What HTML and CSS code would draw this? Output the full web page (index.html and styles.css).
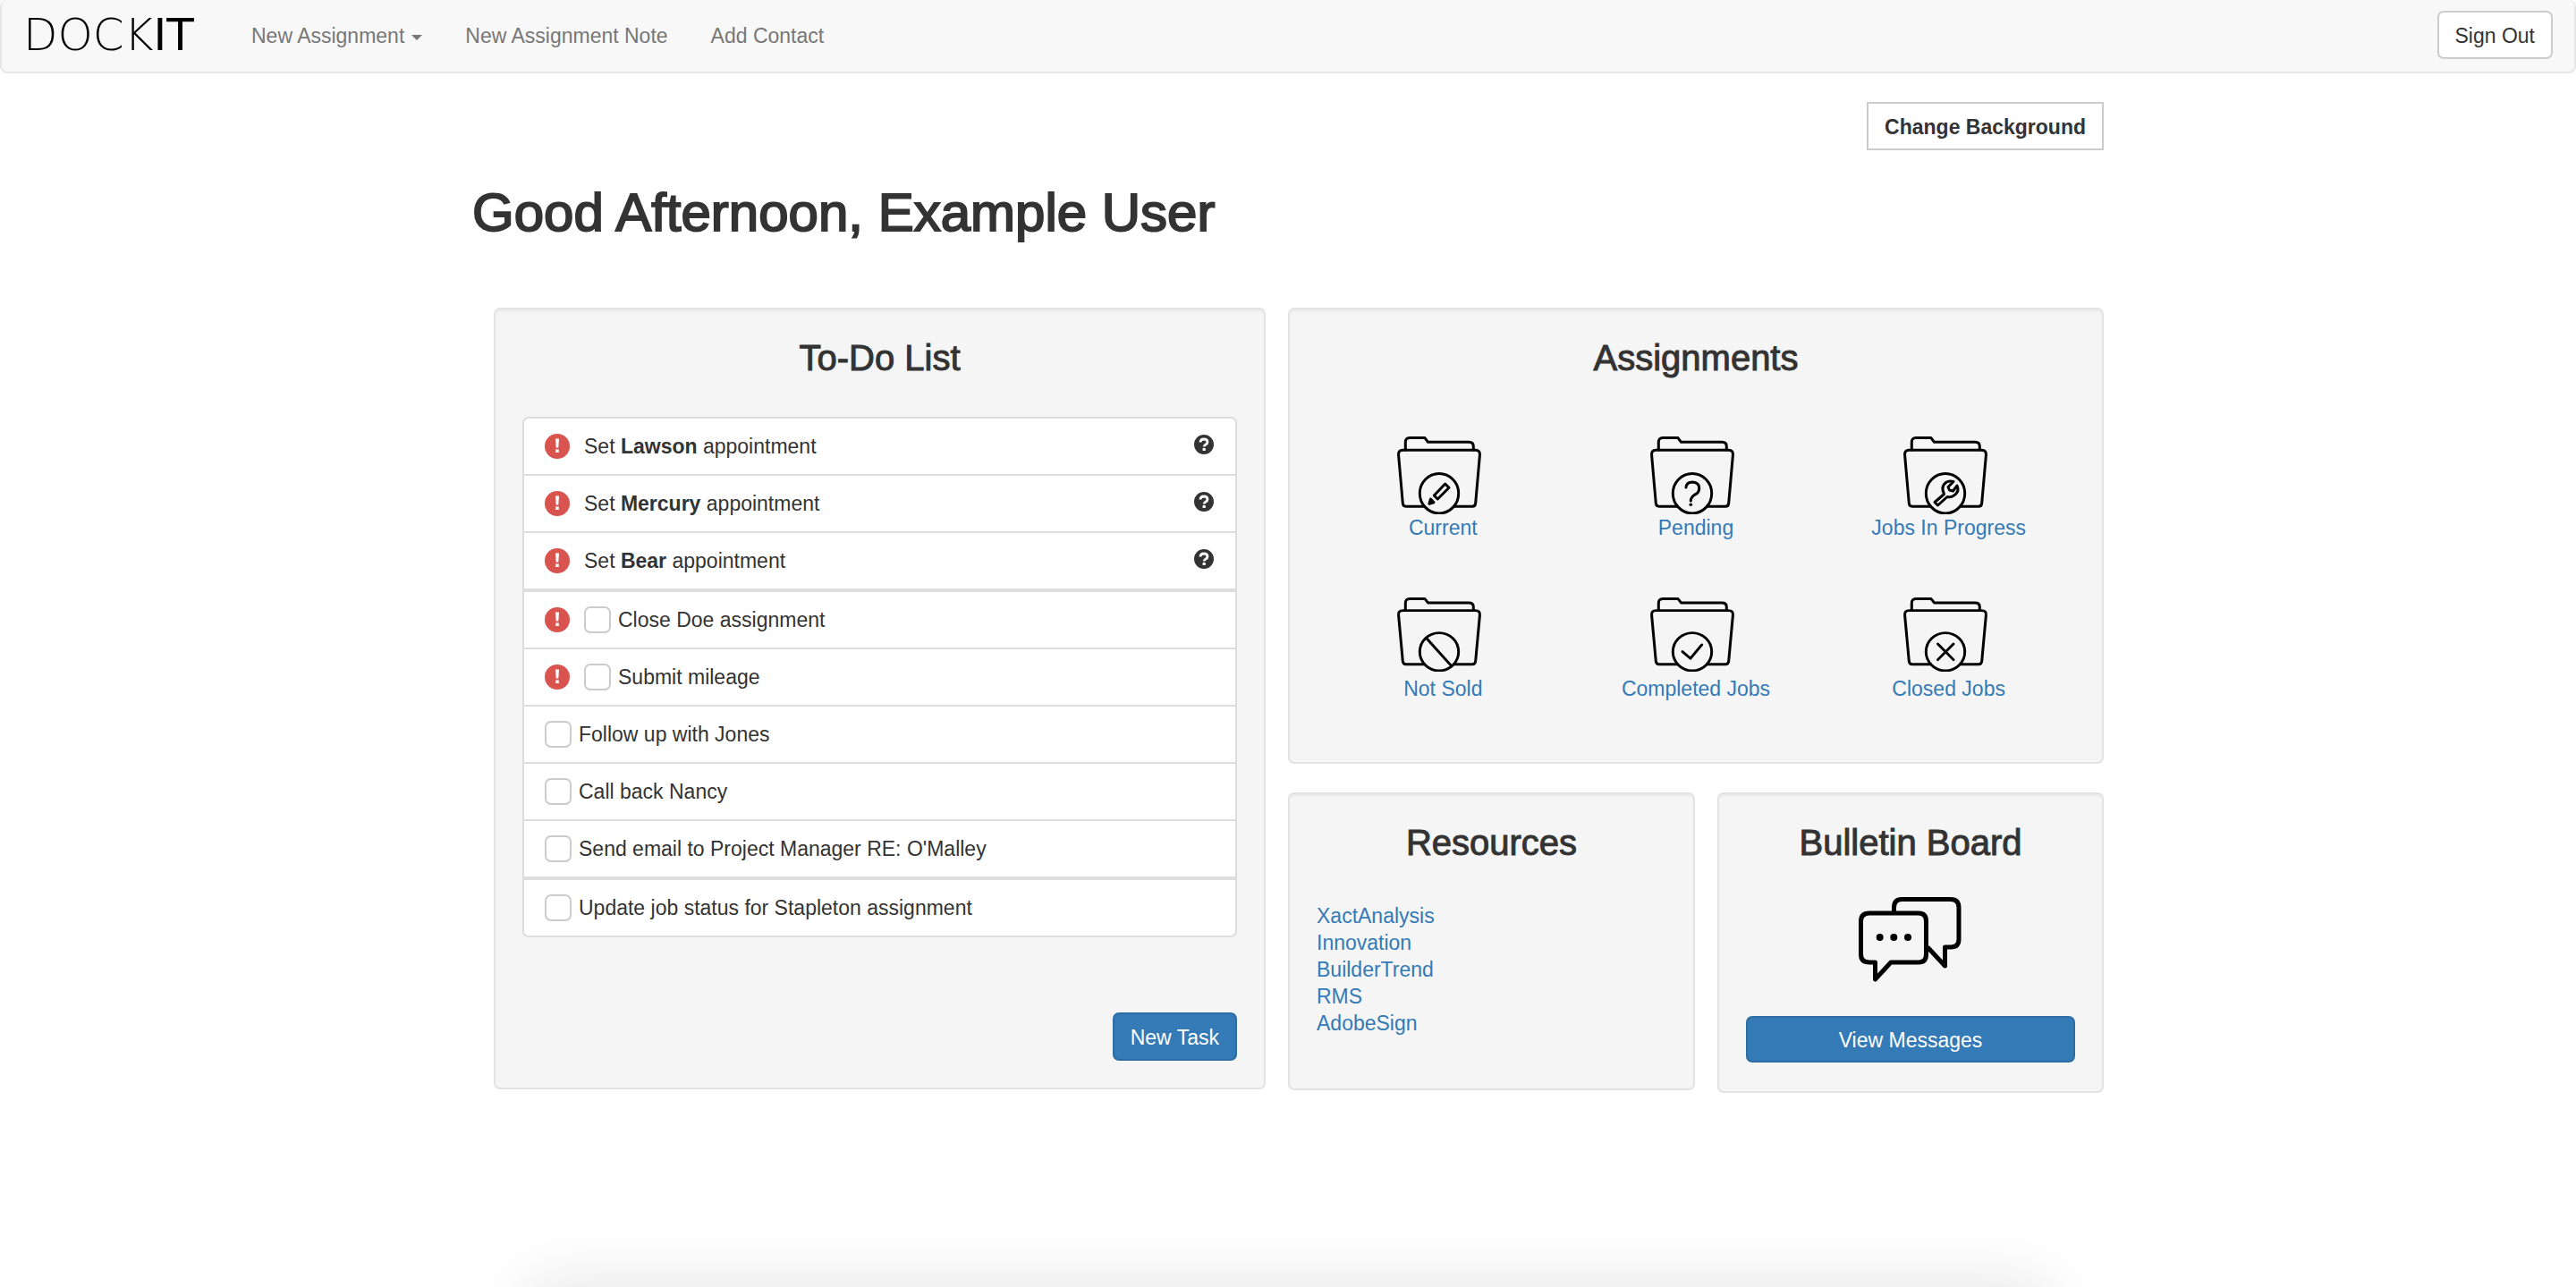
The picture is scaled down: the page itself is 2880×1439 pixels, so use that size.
FILE: index.html
```html
<!DOCTYPE html>
<html lang="en">
<head>
<meta charset="utf-8">
<meta name="viewport" content="width=device-width, initial-scale=1">
<title>Dockit</title>
<link rel="stylesheet" href="styles.css">
</head>
<body>
<svg class="sprite" aria-hidden="true">
  <symbol id="folder" viewBox="0 0 100 88" preserveAspectRatio="none">
    <path d="M12.3 16V7.5Q12.3 2.6 17 2.6H34L37.5 7.3H83Q88.3 7.3 88.3 12V16"/>
    <path d="M33.5 79.3H13Q9.6 79.3 9.3 75.5L4.6 22Q4 16.3 9.5 16.3H90.5Q96 16.3 95.4 22L90.7 75.5Q90.4 79.3 87 79.3H66.5"/>
    <ellipse cx="50" cy="64.7" rx="21.7" ry="22.2"/>
  </symbol>
  <symbol id="alert" viewBox="0 0 28 28">
    <circle cx="14" cy="14" r="14" fill="#d9534f"/>
    <path d="M12 5.5h4l-.7 10h-2.600z M12.200 17.500h3.600v3.500h-3.600z" fill="#fff"/>
  </symbol>
  <symbol id="help" viewBox="0 0 22 22">
    <circle cx="11" cy="11" r="11" fill="#333"/>
    <path d="M7 8.500Q7.200 5 11 5Q15 5 15 8.300Q15 10 13 11Q11.200 12 11.200 13.500" fill="none" stroke="#fff" stroke-width="2.800"/>
    <path d="M9.600 15h3.200v3h-3.200z" fill="#fff"/>
  </symbol>
</svg>

<div class="page">
  <nav class="navbar">
    <a class="brand" href="#">DOCK<span class="brand-end">IT</span></a>
    <div class="nav-links">
      <button class="nav-link" type="button">New Assignment<span class="caret"></span></button>
      <a class="nav-link" href="#">New Assignment Note</a>
      <a class="nav-link" href="#">Add Contact</a>
    </div>
    <button class="btn btn-default" type="button">Sign Out</button>
  </nav>

  <main class="container">
    <div class="toolbar">
      <button class="btn btn-default btn-square" type="button">Change Background</button>
    </div>
    <h1>Good Afternoon, Example User</h1>

    <div class="board">
      <section class="panel">
        <h2>To-Do List</h2>
        <div class="tasks">
          <ul class="task-group">
            <li><svg class="alert"><use href="#alert"/></svg><span>Set <b>Lawson</b> appointment</span><svg class="help"><use href="#help"/></svg></li>
            <li><svg class="alert"><use href="#alert"/></svg><span>Set <b>Mercury</b> appointment</span><svg class="help"><use href="#help"/></svg></li>
            <li><svg class="alert"><use href="#alert"/></svg><span>Set <b>Bear</b> appointment</span><svg class="help"><use href="#help"/></svg></li>
          </ul>
          <ul class="task-group">
            <li><svg class="alert"><use href="#alert"/></svg><label><input type="checkbox">Close Doe assignment</label></li>
            <li><svg class="alert"><use href="#alert"/></svg><label><input type="checkbox">Submit mileage</label></li>
            <li><label><input type="checkbox">Follow up with Jones</label></li>
            <li><label><input type="checkbox">Call back Nancy</label></li>
            <li><label><input type="checkbox">Send email to Project Manager RE: O'Malley</label></li>
          </ul>
          <ul class="task-group">
            <li><label><input type="checkbox">Update job status for Stapleton assignment</label></li>
          </ul>
        </div>
        <div class="panel-actions">
          <button class="btn btn-primary" type="button">New Task</button>
        </div>
      </section>

      <div class="side">
        <section class="panel">
          <h2>Assignments</h2>
          <div class="folders">
            <a class="folder" href="#">
              <svg viewBox="0 0 100 88"><use href="#folder"/><path d="M56.700 54L61 58.300L48.300 71L44.300 67Z"/><path d="M38.900 76.300L40.500 71L44 74.700Z" fill="#000"/></svg>
              Current
            </a>
            <a class="folder" href="#">
              <svg viewBox="0 0 100 88"><use href="#folder"/><path d="M43 58Q43.500 52 50.300 52Q57.700 52.500 57.700 59Q57.700 64 53 66Q48.300 69 48.300 73"/><circle class="dot" cx="48.300" cy="77.300" r="1.800"/></svg>
              Pending
            </a>
            <a class="folder" href="#">
              <svg viewBox="0 0 100 88"><use href="#folder"/><path d="M38 74.500L48.500 65.500Q44.500 57 50.500 52.500Q54 50 59 51.500L53 57.500L54.500 61L58.500 62L63 56Q65.500 61.500 61.500 65.500Q57.500 69.500 52 68.500L41.500 78Z"/></svg>
              Jobs In Progress
            </a>
            <a class="folder folder-low" href="#">
              <svg viewBox="0 0 100 88" preserveAspectRatio="none"><use href="#folder"/><path d="M35.500 48.500L63.500 81"/></svg>
              Not Sold
            </a>
            <a class="folder folder-low" href="#">
              <svg viewBox="0 0 100 88" preserveAspectRatio="none"><use href="#folder"/><path d="M39 64.500L48 72.500L60.700 56.500"/></svg>
              Completed Jobs
            </a>
            <a class="folder folder-low" href="#">
              <svg viewBox="0 0 100 88" preserveAspectRatio="none"><use href="#folder"/><path d="M41.500 55.500L59 74M59 55.500L41.500 74"/></svg>
              Closed Jobs
            </a>
          </div>
        </section>

        <div class="pair">
          <section class="panel">
            <h2>Resources</h2>
            <ul class="resources">
              <li><a href="#">XactAnalysis</a></li>
              <li><a href="#">Innovation</a></li>
              <li><a href="#">BuilderTrend</a></li>
              <li><a href="#">RMS</a></li>
              <li><a href="#">AdobeSign</a></li>
            </ul>
          </section>
          <section class="panel bulletin">
            <h2>Bulletin Board</h2>
            <svg class="chat" viewBox="0 -1 116 98">
              <path d="M39.500 17V12Q39.500 2.500 48 2.500H103Q112 2.500 112 12V47Q112 56 103 56H96.500V77L77 56"/>
              <path d="M12 18H67Q75.500 18 75.500 27V64Q75.500 73 67 73H36L18.500 92V73H12Q2.500 73 2.500 64V27Q2.500 18 12 18Z"/>
              <circle class="dot" cx="23.700" cy="45" r="4"/><circle class="dot" cx="39.300" cy="45" r="4"/><circle class="dot" cx="55" cy="45" r="4"/>
            </svg>
            <button class="btn btn-primary btn-block" type="button">View Messages</button>
          </section>
        </div>
      </div>
    </div>
  </main>
  <div class="next-section"></div>
</div>
</body>
</html>
```

FILE: styles.css
```css
* { box-sizing: border-box; }

body {
  margin: 0;
  background: #fff;
  color: #333;
  font: 23px/30px "Liberation Sans", Arial, sans-serif;
}

a { color: #337ab7; text-decoration: none; }
ul { list-style: none; margin: 0; padding: 0; }
button, input { font: inherit; margin: 0; }
svg { display: block; flex: none; }
.sprite { position: absolute; width: 0; height: 0; }

.page {
  display: flex;
  flex-direction: column;
  min-height: 100vh;
  overflow: hidden;
}

/* Navigation */
.navbar {
  display: flex;
  align-items: center;
  height: 82px;
  padding: 0 24px 2px 24px;
  background: #f8f8f8;
  border: 2px solid #e7e7e7;
  border-top: 0;
  border-radius: 8px;
}
.brand {
  width: 231px;
  color: #000;
  font: 200 50px/60px "DejaVu Sans", "DejaVu Sans Light", sans-serif;
}
.brand-end { font-weight: 400; }
.nav-links { display: flex; flex: 1; }
.nav-link {
  display: flex;
  align-items: center;
  padding: 2px 24px 0;
  border: 0;
  background: none;
  color: #777;
}
.caret {
  margin: 4px 0 0 8px;
  border: 6px solid transparent;
  border-top-color: #777;
  border-bottom: 0;
}

/* Buttons */
.btn {
  height: 54px;
  padding: 2px 18px 0;
  border: 2px solid;
  border-radius: 7px;
}
.btn-default { background: #fff; border-color: #ccc; color: #333; }
.btn-primary { background: #337ab7; border-color: #2e6da4; color: #fff; }
.btn-square { border-radius: 0; font-weight: 700; }
.btn-block { width: 100%; height: 52px; }

/* Page heading */
.container {
  width: 100%;
  max-width: 1824px;
  margin: 0 auto;
  padding: 32px 0;
}
.toolbar { display: flex; justify-content: flex-end; }
h1, h2 { font-weight: 400; -webkit-text-stroke: 1px; }
h1 {
  margin: 37px 0 73px;
  font-size: 60px;
  line-height: 66px;
  -webkit-text-stroke: 2px;
}
h2 {
  margin: 0 0 38px;
  font-size: 40px;
  line-height: 44px;
  text-align: center;
}

/* Panels */
.board {
  display: grid;
  grid-template-columns: 863fr 912fr;
  gap: 25px;
  align-items: start;
  padding-left: 24px;
}
.side { display: grid; gap: 32px; }
.pair {
  display: grid;
  grid-template-columns: 455fr 432fr;
  gap: 25px;
  align-items: start;
}
.panel {
  padding: 32px 30px 30px;
  background: #f5f5f5;
  border: 2px solid #e3e3e3;
  border-radius: 7px;
  box-shadow: inset 0 2px 2px rgba(0, 0, 0, .05);
}
.bulletin { padding-bottom: 32px; }
.panel-actions { display: flex; justify-content: flex-end; margin-top: 84px; }

/* To-do list */
.tasks {
  margin-top: 44px;
  border-radius: 7px;
  overflow: hidden;
  border: 2px solid #ddd;
  background: #fff;
}
.task-group + .task-group { border-top: 4px solid #ddd; }
.task-group li {
  display: flex;
  align-items: center;
  gap: 16px;
  height: 62px;
  padding: 0 23px;
}
.task-group li + li { height: 64px; border-top: 2px solid #ddd; }
.task-group label { display: flex; align-items: center; gap: 8px; }
.task-group input {
  appearance: none;
  width: 30px;
  height: 30px;
  border: 2px solid #ccc;
  border-radius: 7px;
  background: #fff;
}
.alert { width: 28px; height: 28px; }
.help { width: 22px; height: 22px; margin: 0 1px 4px auto; }

/* Assignment folders */
.folders {
  display: grid;
  grid-template-columns: repeat(3, 1fr);
  row-gap: 62px;
  padding: 27px 0 37px;
}
.folder { text-align: center; }
.folder svg {
  width: 100px;
  height: 88px;
  margin: 0 auto;
  position: relative;
  left: -4px;
}
.folder-low svg { height: 84px; margin-bottom: 4px; }
.folder svg, .chat {
  fill: none;
  stroke: #000;
  stroke-width: 3;
  stroke-linecap: round;
  stroke-linejoin: round;
}
.dot { fill: #000; stroke: none; }

.resources { padding: 7px 0 28px; }

.chat {
  width: 116px;
  height: 98px;
  margin: 0 auto 36px;
  stroke-width: 5;
  stroke-linecap: butt;
}

/* Top edge of the section below the fold */
.next-section {
  height: 120px;
  margin: auto 592px -120px;
  box-shadow: 0 0 76px rgba(0, 0, 0, .12);
}
```
